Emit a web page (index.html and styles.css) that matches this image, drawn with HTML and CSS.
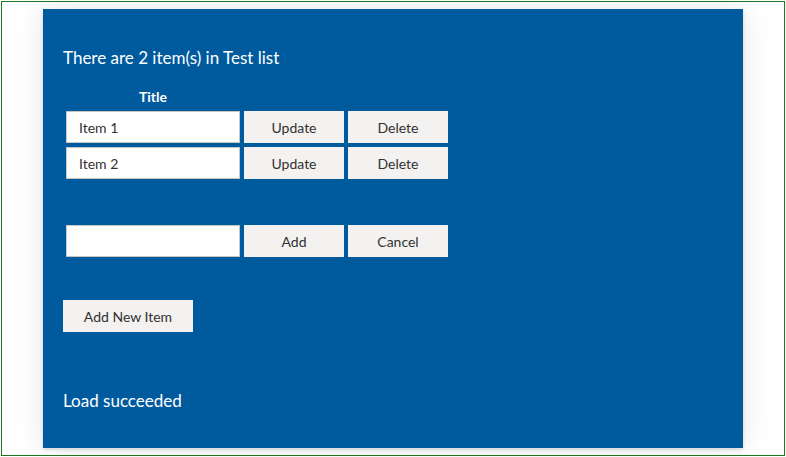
FILE: index.html
```html
<!DOCTYPE html>
<html lang="en">
<head>
<meta charset="utf-8">
<title>Test list</title>
<link rel="stylesheet" href="styles.css">
</head>
<body>
<div class="frame">
  <div class="panel">
    <p class="summary">There are 2 item(s) in Test list</p>
    <div class="grid">
      <div class="th">Title</div><div></div><div></div>
      <input class="field" type="text" value="Item 1">
      <button class="btn">Update</button>
      <button class="btn">Delete</button>
      <input class="field" type="text" value="Item 2">
      <button class="btn">Update</button>
      <button class="btn">Delete</button>
    </div>
    <div class="grid add-row">
      <input class="field" type="text" value="">
      <button class="btn">Add</button>
      <button class="btn">Cancel</button>
    </div>
    <button class="btn add-new">Add New Item</button>
    <p class="status">Load succeeded</p>
  </div>
</div>
</body>
</html>
```
FILE: styles.css
```css
html, body {
  margin: 0;
  background: #ffffff;
}
body {
  padding: 1px;
  font-family: "Segoe UI", Lato, "Open Sans", sans-serif;
}
.frame {
  width: 782px;
  height: 453px;
  border: 1px solid #1e7a1e;
  display: flex;
  flex-direction: column;
  align-items: flex-start;
}
.panel {
  margin: 7px 0 0 41px;
  width: 680px;
  height: 402px;
  padding: 37px 0 0 20px;
  background: #005a9e;
  box-shadow: 0 1.6px 3.6px rgba(0,0,0,0.14), 0 0 28px rgba(0,0,0,0.10);
  display: flex;
  flex-direction: column;
  align-items: flex-start;
}
.summary, .status {
  margin: 0;
  color: #ffffff;
  font-size: 17px;
  font-weight: 400;
  line-height: 24px;
}
.grid {
  display: grid;
  grid-template-columns: 174px 100px 100px;
  gap: 4px;
  margin: 17px 0 0 3px;
}
.th {
  color: #ffffff;
  font-weight: 700;
  font-size: 14px;
  line-height: 20px;
  text-align: center;
}
.field {
  box-sizing: border-box;
  height: 32px;
  margin: 0;
  padding: 0 12px;
  border: 1px solid #c8c6c4;
  background: #ffffff;
  color: #323130;
  font-family: inherit;
  font-size: 14px;
  outline: none;
}
.btn {
  box-sizing: border-box;
  height: 32px;
  margin: 0;
  padding: 0 16px;
  border: none;
  background: #f3f2f1;
  color: #323130;
  font-family: inherit;
  font-size: 14px;
  font-weight: 400;
  cursor: pointer;
}
.add-row {
  margin-top: 46px;
}
.add-new {
  width: 130px;
  margin-top: 43px;
}
.status {
  margin-top: 57px;
}
```
